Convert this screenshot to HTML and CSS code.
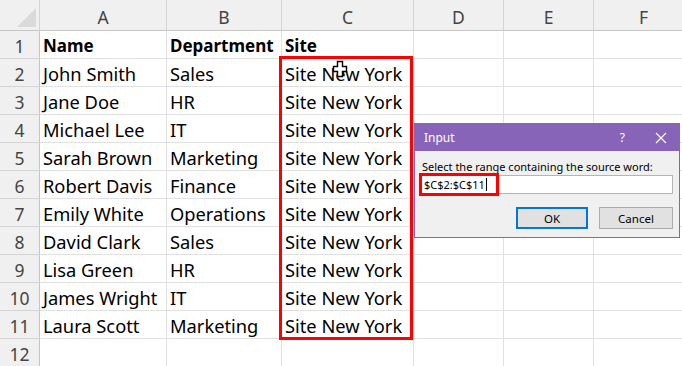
FILE: index.html
```html
<!DOCTYPE html>
<html>
    <head>
        <meta charset="UTF-8">
        <link rel="stylesheet" href="styles.css">
    </head>
    <body>
        <div class="sheet">
            <div class="grid">
                <div class="corner"><div class="tri"></div></div>
                <div class="colhead">A</div>
                <div class="colhead">B</div>
                <div class="colhead">C</div>
                <div class="colhead">D</div>
                <div class="colhead">E</div>
                <div class="colhead">F</div>

                <div class="rowhead">1</div>
                <div class="cell bold">Name</div>
                <div class="cell bold">Department</div>
                <div class="cell bold">Site</div>
                <div class="cell"></div><div class="cell"></div><div class="cell"></div>

                <div class="rowhead">2</div>
                <div class="cell">John Smith</div>
                <div class="cell">Sales</div>
                <div class="cell">Site New York</div>
                <div class="cell"></div><div class="cell"></div><div class="cell"></div>

                <div class="rowhead">3</div>
                <div class="cell">Jane Doe</div>
                <div class="cell">HR</div>
                <div class="cell">Site New York</div>
                <div class="cell"></div><div class="cell"></div><div class="cell"></div>

                <div class="rowhead">4</div>
                <div class="cell">Michael Lee</div>
                <div class="cell">IT</div>
                <div class="cell">Site New York</div>
                <div class="cell"></div><div class="cell"></div><div class="cell"></div>

                <div class="rowhead">5</div>
                <div class="cell">Sarah Brown</div>
                <div class="cell">Marketing</div>
                <div class="cell">Site New York</div>
                <div class="cell"></div><div class="cell"></div><div class="cell"></div>

                <div class="rowhead">6</div>
                <div class="cell">Robert Davis</div>
                <div class="cell">Finance</div>
                <div class="cell">Site New York</div>
                <div class="cell"></div><div class="cell"></div><div class="cell"></div>

                <div class="rowhead">7</div>
                <div class="cell">Emily White</div>
                <div class="cell">Operations</div>
                <div class="cell">Site New York</div>
                <div class="cell"></div><div class="cell"></div><div class="cell"></div>

                <div class="rowhead">8</div>
                <div class="cell">David Clark</div>
                <div class="cell">Sales</div>
                <div class="cell">Site New York</div>
                <div class="cell"></div><div class="cell"></div><div class="cell"></div>

                <div class="rowhead">9</div>
                <div class="cell">Lisa Green</div>
                <div class="cell">HR</div>
                <div class="cell">Site New York</div>
                <div class="cell"></div><div class="cell"></div><div class="cell"></div>

                <div class="rowhead">10</div>
                <div class="cell">James Wright</div>
                <div class="cell">IT</div>
                <div class="cell">Site New York</div>
                <div class="cell"></div><div class="cell"></div><div class="cell"></div>

                <div class="rowhead">11</div>
                <div class="cell">Laura Scott</div>
                <div class="cell">Marketing</div>
                <div class="cell">Site New York</div>
                <div class="cell"></div><div class="cell"></div><div class="cell"></div>

                <div class="rowhead">12</div>
                <div class="cell"></div><div class="cell"></div><div class="cell"></div>
                <div class="cell"></div><div class="cell"></div><div class="cell"></div>
            </div>

            <!-- copied range C2:C11 -->
            <div class="marquee"><div class="ants"></div></div>
            <div class="selbox"></div>

            <svg class="cursor" width="16" height="18" viewBox="0 0 16 18">
                <path d="M5.5 1.5h5v5h4v5h-4v5h-5v-5h-4v-5h4z" fill="#fff" stroke="#000" stroke-width="1.4"/>
            </svg>

            <div class="dialog">
                <div class="titlebar">
                    <span class="dtitle">Input</span>
                    <span class="help">?</span>
                    <svg class="close" width="12" height="12" viewBox="0 0 12 12">
                        <path d="M1 1L11 11M11 1L1 11" stroke="#fff" stroke-width="1.2"/>
                    </svg>
                </div>
                <div class="dbody">
                    <div class="prompt">Select the range containing the source word:</div>
                    <div class="field">
                        <span class="range">$C$2:$C$11<span class="caret"></span></span>
                    </div>
                    <div class="buttons">
                        <div class="btn ok">OK</div>
                        <div class="btn">Cancel</div>
                    </div>
                </div>
            </div>
        </div>
    </body>
</html>
```

FILE: styles.css
```css
body{
    margin: 0;
    background-color: white;
    font-family: "Noto Sans", sans-serif;
    overflow: hidden;
}
.sheet{
    position: relative;
    width: 682px;
    height: 366px;
    overflow: hidden;
}
.grid{
    display: grid;
    grid-template-columns: 40px 127px 115px 132px 90px 90px 100px;
    grid-template-rows: 31px repeat(12, 28px);
    font-size: 18.3px;
    color: black;
}
.corner{
    position: relative;
    background-color: #f0f0f0;
    border-right: 1px solid #d4d4d4;
    border-bottom: 1px solid #c6c6c6;
}
.tri{
    position: absolute;
    right: 3px;
    bottom: 3px;
    width: 0;
    height: 0;
    border-left: 19px solid transparent;
    border-bottom: 19px solid #dadada;
}
.colhead{
    background-color: #f0f0f0;
    border-right: 1px solid #d4d4d4;
    border-bottom: 1px solid #c6c6c6;
    color: #444444;
    font-size: 17.5px;
    display: flex;
    justify-content: center;
    align-items: center;
    padding-top: 3px;
    box-sizing: border-box;
}
.rowhead{
    background-color: #f0f0f0;
    border-right: 1px solid #c6c6c6;
    border-bottom: 1px solid #d4d4d4;
    color: #444444;
    font-size: 17.5px;
    display: flex;
    justify-content: center;
    align-items: center;
    padding-top: 2px;
    box-sizing: border-box;
}
.cell{
    border-right: 1px solid #e1e1e1;
    border-bottom: 1px solid #e1e1e1;
    padding-left: 3px;
    padding-top: 1px;
    display: flex;
    align-items: center;
    white-space: nowrap;
    overflow: visible;
    box-sizing: border-box;
}
.bold{
    font-weight: bold;
    font-size: 17px;
}
.marquee{
    position: absolute;
    left: 281px;
    top: 57px;
    width: 131px;
    height: 281px;
    border: 1px solid #1e7145;
    box-sizing: border-box;
}
.ants{
    position: absolute;
    inset: -1px;
    border: 1px dashed white;
}
.selbox{
    position: absolute;
    left: 279px;
    top: 56px;
    width: 134px;
    height: 284px;
    border: 3px solid #ff0000;
    box-sizing: border-box;
}
.cursor{
    position: absolute;
    left: 332px;
    top: 60px;
}
.dialog{
    position: absolute;
    left: 414px;
    top: 123px;
    width: 266px;
    height: 115px;
    background-color: #f0f0f0;
    border: 1px solid #8764b8;
    box-sizing: border-box;
}
.titlebar{
    display: flex;
    align-items: center;
    height: 27px;
    background-color: #8764b8;
    color: white;
    padding-left: 9px;
    font-size: 12px;
}
.dtitle{
    flex: 1;
}
.help{
    margin-right: 30px;
    font-size: 12px;
}
.close{
    margin-right: 12px;
}
.dbody{
    padding: 8px 6px 0 4px;
    font-size: 11px;
}
.prompt{
    padding-left: 3px;
    height: 16px;
}
.field{
    height: 19px;
    background-color: white;
    border: 1px solid #b5b5b5;
    box-sizing: border-box;
    display: flex;
    align-items: center;
    padding-left: 4px;
    font-size: 11px;
}
.range{
    display: flex;
    align-items: center;
    outline: 3px solid #ff0000;
    outline-offset: 2px;
    padding-right: 7px;
    line-height: 13px;
}
.caret{
    width: 1px;
    height: 13px;
    background-color: black;
    margin-left: 1px;
}
.buttons{
    display: flex;
    justify-content: flex-end;
    gap: 11px;
    margin-top: 13px;
}
.btn{
    width: 74px;
    height: 22px;
    background-color: #e1e1e1;
    border: 1px solid #adadad;
    box-sizing: border-box;
    display: flex;
    justify-content: center;
    align-items: center;
    font-size: 11.5px;
}
.ok{
    border: 2px solid #0078d7;
    width: 72px;
}
```
